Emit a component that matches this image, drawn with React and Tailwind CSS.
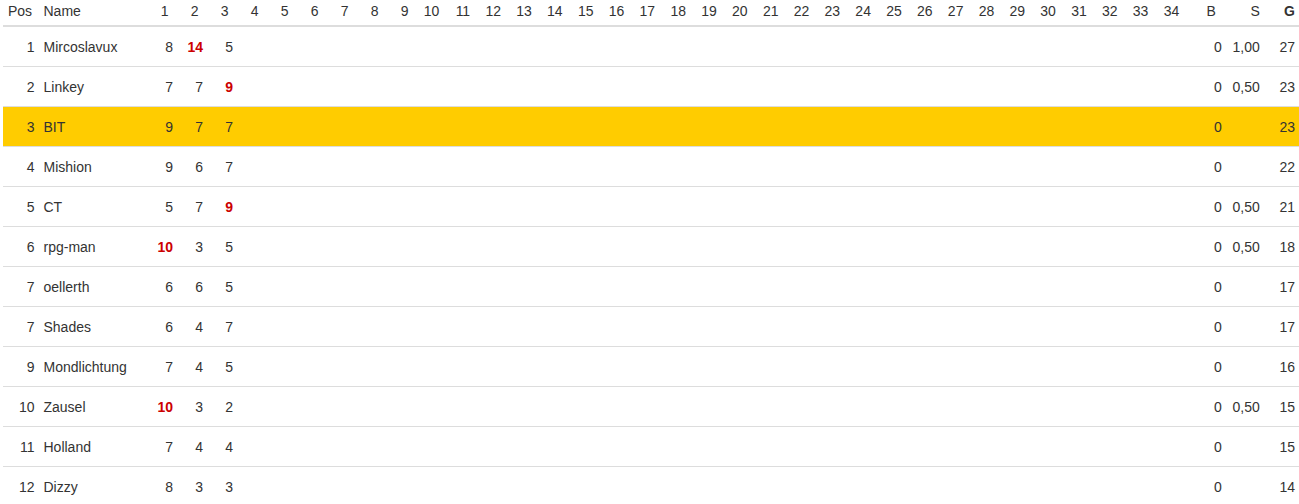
import React from "react";

const rows = [
  { pos: 1, name: "Mircoslavux", r: [[8], [14, 1], [5]], b: "0", s: "1,00", g: 27 },
  { pos: 2, name: "Linkey", r: [[7], [7], [9, 1]], b: "0", s: "0,50", g: 23 },
  { pos: 3, name: "BIT", r: [[9], [7], [7]], b: "0", s: "", g: 23, hl: true },
  { pos: 4, name: "Mishion", r: [[9], [6], [7]], b: "0", s: "", g: 22 },
  { pos: 5, name: "CT", r: [[5], [7], [9, 1]], b: "0", s: "0,50", g: 21 },
  { pos: 6, name: "rpg-man", r: [[10, 1], [3], [5]], b: "0", s: "0,50", g: 18 },
  { pos: 7, name: "oellerth", r: [[6], [6], [5]], b: "0", s: "", g: 17 },
  { pos: 7, name: "Shades", r: [[6], [4], [7]], b: "0", s: "", g: 17 },
  { pos: 9, name: "Mondlichtung", r: [[7], [4], [5]], b: "0", s: "", g: 16 },
  { pos: 10, name: "Zausel", r: [[10, 1], [3], [2]], b: "0", s: "0,50", g: 15 },
  { pos: 11, name: "Holland", r: [[7], [4], [4]], b: "0", s: "", g: 15 },
  { pos: 12, name: "Dizzy", r: [[8], [3], [3]], b: "0", s: "", g: 14 },
];

const rounds = Array.from({ length: 34 }, (_, i) => i + 1);

export default function App() {
  return (
    <div
      className="w-[1299px] h-[504px] overflow-hidden bg-white pl-[3px] text-[14px] text-[#333]"
      style={{ fontFamily: '"Liberation Sans", Arial, sans-serif' }}
    >
      <table className="table-fixed border-collapse w-[1296px]">
        <colgroup>
          <col className="w-[35.5px]" />
          <col className="w-[112px]" />
          {rounds.map((n) => (
            <col key={n} className={n < 10 ? "w-[30px]" : "w-[30.84px]"} />
          ))}
          <col className="w-[36.5px]" />
          <col className="w-[38px]" />
          <col className="w-[33px]" />
        </colgroup>
        <thead>
          <tr className="border-b-2 border-[#ddd]">
            <th className="h-[25px] pt-[1px] pb-[4px] pl-[5px] text-left font-normal leading-5 align-top whitespace-nowrap">Pos</th>
            <th className="h-[25px] pt-[1px] pb-[4px] pl-[5px] text-left font-normal leading-5 align-top">Name</th>
            {rounds.map((n) => (
              <th key={n} className="pt-[1px] pb-[4px] pr-[12px] text-right font-normal leading-5 align-top whitespace-nowrap">
                {n}
              </th>
            ))}
            <th className="pt-[1px] pb-[4px] pr-[12px] text-right font-normal leading-5 align-top">B</th>
            <th className="pt-[1px] pb-[4px] pr-[6px] text-right font-normal leading-5 align-top">S</th>
            <th className="pt-[1px] pb-[4px] pr-[4px] text-right font-bold leading-5 align-top">G</th>
          </tr>
        </thead>
        <tbody>
          {rows.map((row, i) => (
            <tr key={i} className={(i === 0 ? "" : "border-t border-[#ddd] ") + (row.hl ? "bg-[#ffcc00]" : "")}>
              <td className="h-[39.1px] pt-[10px] pb-[9px] pr-[4px] text-right leading-5 align-top whitespace-nowrap">{row.pos}</td>
              <td className="pt-[10px] pb-[9px] pl-[5px] text-left leading-5 align-top whitespace-nowrap">{row.name}</td>
              {rounds.map((n) => {
                const v = row.r[n - 1];
                return (
                  <td key={n} className="pt-[10px] pb-[9px] pr-[7.5px] text-right leading-5 align-top whitespace-nowrap">
                    {v ? (
                      v[1] ? <span className="font-bold text-[#cc0000]">{v[0]}</span> : v[0]
                    ) : null}
                  </td>
                );
              })}
              <td className="pt-[10px] pb-[9px] pr-[6px] text-right leading-5 align-top">{row.b}</td>
              <td className="pt-[10px] pb-[9px] pr-[6px] text-right leading-5 align-top">{row.s}</td>
              <td className="pt-[10px] pb-[9px] pr-[4px] text-right leading-5 align-top">{row.g}</td>
            </tr>
          ))}
        </tbody>
      </table>
    </div>
  );
}
